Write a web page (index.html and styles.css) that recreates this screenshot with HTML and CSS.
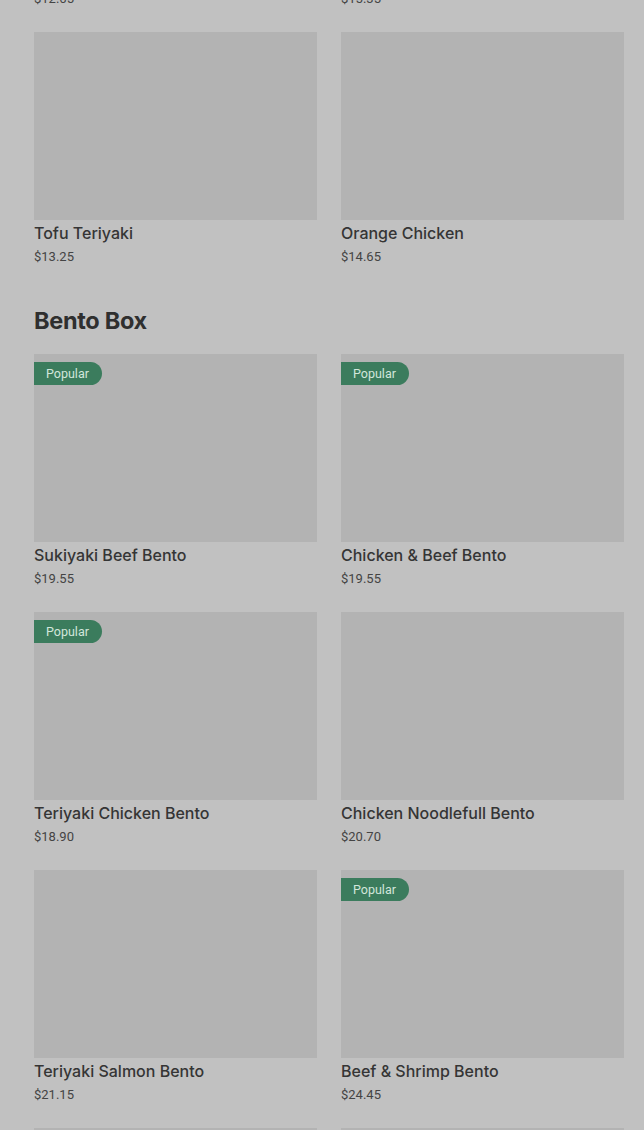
FILE: index.html
```html
<!DOCTYPE html>
<html>
<head>
<meta charset="utf-8">
<link rel="stylesheet" href="styles.css">
</head>
<body>
<main class="menu">
  <section class="section">
    <div class="grid">
      <div class="card"><div class="thumb"></div><div class="name">Chicken Teriyaki</div><div class="price">$12.65</div></div>
      <div class="card"><div class="thumb"></div><div class="name">Beef Teriyaki</div><div class="price">$15.35</div></div>
      <div class="card"><div class="thumb"></div><div class="name">Tofu Teriyaki</div><div class="price">$13.25</div></div>
      <div class="card"><div class="thumb"></div><div class="name">Orange Chicken</div><div class="price">$14.65</div></div>
    </div>
  </section>
  <section class="section">
    <h2 class="heading">Bento Box</h2>
    <div class="grid">
      <div class="card"><div class="thumb"><span class="badge">Popular</span></div><div class="name">Sukiyaki Beef Bento</div><div class="price">$19.55</div></div>
      <div class="card"><div class="thumb"><span class="badge">Popular</span></div><div class="name">Chicken &amp; Beef Bento</div><div class="price">$19.55</div></div>
      <div class="card"><div class="thumb"><span class="badge">Popular</span></div><div class="name">Teriyaki Chicken Bento</div><div class="price">$18.90</div></div>
      <div class="card"><div class="thumb"></div><div class="name">Chicken Noodlefull Bento</div><div class="price">$20.70</div></div>
      <div class="card"><div class="thumb"></div><div class="name">Teriyaki Salmon Bento</div><div class="price">$21.15</div></div>
      <div class="card"><div class="thumb"><span class="badge">Popular</span></div><div class="name">Beef &amp; Shrimp Bento</div><div class="price">$24.45</div></div>
      <div class="card"><div class="thumb"></div><div class="name">Salmon &amp; Chicken Bento</div><div class="price">$22.35</div></div>
      <div class="card"><div class="thumb"></div><div class="name">Shrimp Tempura Bento</div><div class="price">$21.85</div></div>
    </div>
  </section>
</main>
</body>
</html>
```

FILE: styles.css
```css
html, body {
  margin: 0;
  padding: 0;
  background: #c1c1c1;
  height: 1130px;
  overflow: hidden;
}
body {
  font-family: Roboto, "Liberation Sans", sans-serif;
  color: #333;
}
.menu {
  margin-top: -226px;
  padding: 0 20px 0 34px;
}
.section {
  margin-bottom: 39px;
}
.heading {
  margin: 0 0 18px 0;
  font-family: Inter, Roboto, sans-serif;
  font-size: 23.5px;
  line-height: 30px;
  font-weight: 700;
  color: #2f2f2f;
  letter-spacing: -0.3px;
}
.grid {
  display: grid;
  grid-template-columns: 283px 283px;
  column-gap: 24px;
  row-gap: 23px;
}
.card {
  display: flex;
  flex-direction: column;
}
.thumb {
  position: relative;
  height: 188px;
  background: #b3b3b3;
}
.badge {
  position: absolute;
  left: 0;
  top: 8px;
  height: 23px;
  line-height: 23px;
  padding: 0 13px 0 12px;
  background: #3b7c5d;
  color: #d2e6db;
  font-size: 12.5px;
  border-radius: 0 12px 12px 0;
}
.name {
  margin-top: 1px;
  font-family: Inter, Roboto, sans-serif;
  font-size: 16px;
  line-height: 24px;
  font-weight: 500;
  color: #353535;
}
.price {
  padding-top: 2px;
  font-size: 13px;
  line-height: 20px;
  color: #444;
}
```
